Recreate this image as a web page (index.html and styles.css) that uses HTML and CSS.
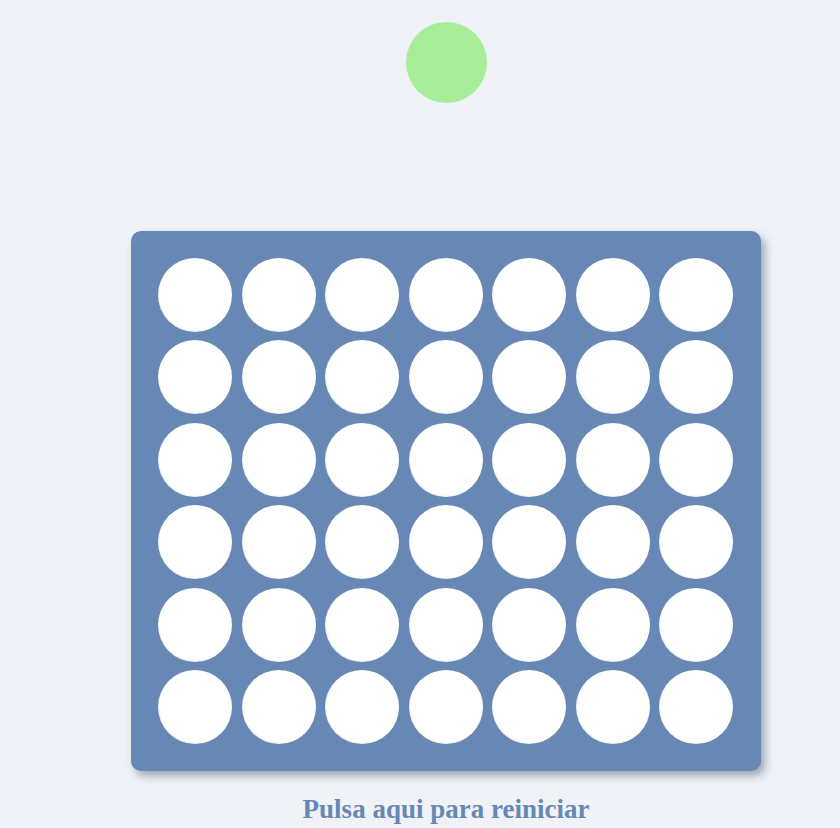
FILE: index.html
```html
<!DOCTYPE html>
<html lang="es">
<head>
<meta charset="utf-8">
<title>Conecta 4</title>
<link rel="stylesheet" href="styles.css">
</head>
<body>
<main class="game">
  <div class="turn-piece"></div>
  <div class="board">
    <div class="cell"></div><div class="cell"></div><div class="cell"></div><div class="cell"></div><div class="cell"></div><div class="cell"></div><div class="cell"></div>
    <div class="cell"></div><div class="cell"></div><div class="cell"></div><div class="cell"></div><div class="cell"></div><div class="cell"></div><div class="cell"></div>
    <div class="cell"></div><div class="cell"></div><div class="cell"></div><div class="cell"></div><div class="cell"></div><div class="cell"></div><div class="cell"></div>
    <div class="cell"></div><div class="cell"></div><div class="cell"></div><div class="cell"></div><div class="cell"></div><div class="cell"></div><div class="cell"></div>
    <div class="cell"></div><div class="cell"></div><div class="cell"></div><div class="cell"></div><div class="cell"></div><div class="cell"></div><div class="cell"></div>
    <div class="cell"></div><div class="cell"></div><div class="cell"></div><div class="cell"></div><div class="cell"></div><div class="cell"></div><div class="cell"></div>
  </div>
  <p class="restart">Pulsa aqui para reiniciar</p>
</main>
</body>
</html>
```

FILE: styles.css
```css
html, body {
  margin: 0;
  padding: 0;
  background: #eff3f8;
  overflow: hidden;
}

.game {
  width: 630px;
  margin-left: 131px;
  padding-top: 22px;
  display: flex;
  flex-direction: column;
  align-items: center;
}

.turn-piece {
  width: 81px;
  height: 81px;
  border-radius: 50%;
  background: #a8ee9a;
}

.board {
  margin-top: 128px;
  box-sizing: border-box;
  width: 630px;
  height: 540px;
  padding: 27px 28px 27px 27px;
  background: #6788b4;
  border-radius: 10px;
  box-shadow: 4px 5px 8px rgba(60, 70, 90, 0.45);
  display: grid;
  grid-template-columns: repeat(7, 74px);
  grid-template-rows: repeat(6, 74px);
  justify-content: space-between;
  align-content: space-between;
}

.cell {
  width: 74px;
  height: 74px;
  border-radius: 50%;
  background: #ffffff;
  box-shadow: inset 1px -1px 1px rgba(0, 0, 0, 0.06);
}

.restart {
  margin: 23px 0 0;
  font-family: "Liberation Serif", "Times New Roman", serif;
  font-weight: bold;
  font-size: 27px;
  line-height: 30px;
  color: #6788b4;
  cursor: pointer;
}
```
